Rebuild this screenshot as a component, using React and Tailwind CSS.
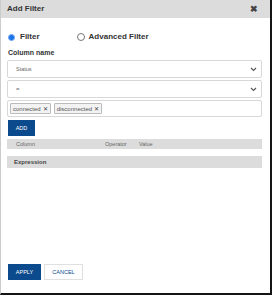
import React from "react";

function Chevron() {
  return (
    <svg width="7" height="5" viewBox="0 0 7 5" className="shrink-0">
      <path d="M1 1 L3.5 3.5 L6 1" fill="none" stroke="#555" strokeWidth="1.1" />
    </svg>
  );
}

function Tag({ label }) {
  return (
    <span className="flex items-center h-[11px] px-[2px] border border-[#bbb] bg-[#f3f3f3] rounded-[1px] text-[6px] text-[#555] leading-none gap-[2px]">
      {label}
      <span className="text-[6px] text-[#444]">✕</span>
    </span>
  );
}

export default function App() {
  return (
    <div
      className="w-[272px] h-[295px] bg-white border-r-2 border-b-2 border-[#151515] border-l border-l-[#ccc] flex flex-col"
      style={{ fontFamily: '"Liberation Sans", Arial, sans-serif' }}
    >
      <div className="h-[18px] bg-[#dcdcdc] flex items-center justify-between pl-[6px] pr-[12px]">
        <span className="text-[8px] font-bold text-[#333]">Add Filter</span>
        <span className="text-[9px] font-bold text-[#444] leading-none">✖</span>
      </div>
      <div className="flex flex-col px-[6px] flex-1">
        <div className="flex items-center mt-[13px] h-[12px]">
          <span className="w-[7px] h-[7px] rounded-full bg-[#1a73e8] border border-[#6fa4f0] ml-[1px]" />
          <span className="ml-[5px] text-[8px] font-bold text-[#333]">Filter</span>
          <span className="ml-[37px] w-[8px] h-[8px] rounded-full border border-[#777] bg-white" />
          <span className="ml-[4px] text-[8px] font-bold text-[#333]">Advanced Filter</span>
        </div>
        <div className="mt-[5px] text-[7px] font-bold text-[#333] pl-[1px] leading-[10px]">Column name</div>
        <div className="mt-[2px] h-[18px] w-[255px] border border-[#d8d8d8] rounded-[2px] flex items-center justify-between pl-[8px] pr-[4px]">
          <span className="text-[5.5px] text-[#666]">Status</span>
          <Chevron />
        </div>
        <div className="mt-[2px] h-[18px] w-[255px] border border-[#d8d8d8] rounded-[2px] flex items-center justify-between pl-[8px] pr-[4px]">
          <span className="text-[6px] text-[#666]">=</span>
          <Chevron />
        </div>
        <div className="mt-[2px] h-[17px] w-[255px] border border-[#d8d8d8] rounded-[2px] flex items-center gap-[3px] pl-[2px]">
          <Tag label="connected" />
          <Tag label="disconnected" />
        </div>
        <div className="mt-[3px] w-[27px] h-[16px] bg-[#0b4a8c] flex items-center justify-center ml-[1px]">
          <span className="text-[5.5px] text-white">ADD</span>
        </div>
        <div className="mt-[3px] h-[10px] w-[255px] bg-[#dcdcdc] flex items-center text-[5.5px] text-[#666]">
          <span className="ml-[9px] w-[89px]">Column</span>
          <span className="w-[34px]">Operator</span>
          <span>Value</span>
        </div>
        <div className="mt-[7px] h-[12px] w-[255px] bg-[#dcdcdc] flex items-center">
          <span className="ml-[7px] text-[6px] font-bold text-[#444]">Expression</span>
        </div>
        <div className="flex-1" />
        <div className="flex gap-[3px] mb-[13px] ml-[1px]">
          <div className="w-[33px] h-[16px] bg-[#0b4a8c] flex items-center justify-center">
            <span className="text-[5.5px] text-white">APPLY</span>
          </div>
          <div className="w-[39px] h-[16px] bg-white border border-[#e0e0e0] flex items-center justify-center">
            <span className="text-[5.5px] text-[#0b4a8c]">CANCEL</span>
          </div>
        </div>
      </div>
    </div>
  );
}
